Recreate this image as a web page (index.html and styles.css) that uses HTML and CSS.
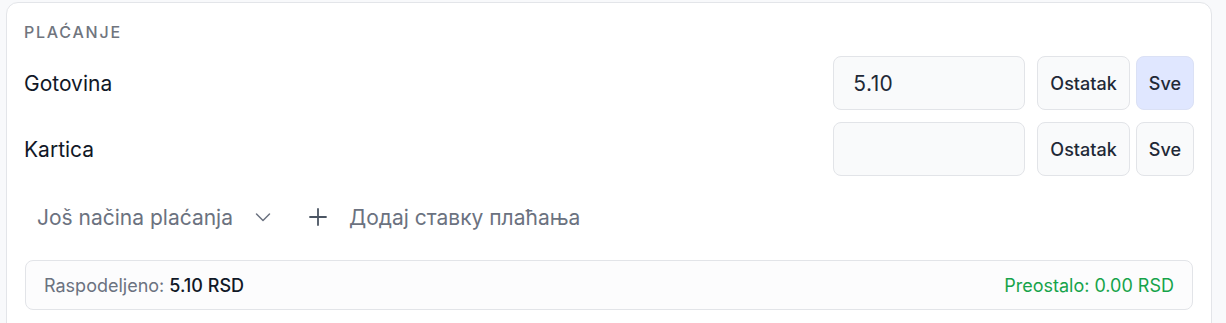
FILE: index.html
```html
<!DOCTYPE html>
<html lang="sr">
<head>
    <meta charset="UTF-8">
    <meta name="viewport" content="width=device-width, initial-scale=1.0">
    <title>Plaćanje</title>
    <link rel="stylesheet" href="styles.css">
</head>
<body>
    <div class="payment-card">
        <h3 class="payment-title">Plaćanje</h3>

        <div class="payment-row">
            <span class="payment-label">Gotovina</span>
            <div class="payment-controls">
                <input class="amount-input" type="text" value="5.10">
                <button class="btn">Ostatak</button>
                <button class="btn btn-active">Sve</button>
            </div>
        </div>

        <div class="payment-row">
            <span class="payment-label">Kartica</span>
            <div class="payment-controls">
                <input class="amount-input" type="text" value="">
                <button class="btn">Ostatak</button>
                <button class="btn">Sve</button>
            </div>
        </div>

        <div class="payment-links">
            <button class="link-btn">
                Još načina plaćanja
                <svg class="chevron" width="16" height="16" viewBox="0 0 16 16" fill="none" stroke="currentColor" stroke-width="1.5" stroke-linecap="round" stroke-linejoin="round"><path d="M1.5 5l6.5 6.5L14.5 5"/></svg>
            </button>
            <button class="link-btn">
                <svg class="plus" width="18" height="18" viewBox="0 0 18 18" fill="none" stroke="currentColor" stroke-width="1.8" stroke-linecap="round"><path d="M9 1v16M1 9h16"/></svg>
                Додај ставку плаћања
            </button>
        </div>

        <div class="payment-summary">
            <span class="summary-left">Raspodeljeno: <strong>5.10 RSD</strong></span>
            <span class="summary-right">Preostalo: 0.00 RSD</span>
        </div>
    </div>
</body>
</html>
```

FILE: styles.css
```css
* {
    margin: 0;
    padding: 0;
    box-sizing: border-box;
}

body {
    font-family: 'Inter', 'Noto Sans', sans-serif;
    background: #f8f9fb;
    color: #111827;
    padding: 2px 14px 0 6px;
    height: 323px;
    overflow: hidden;
}

.payment-card {
    background: #ffffff;
    border: 1px solid #e3e5e9;
    border-radius: 12px;
    padding: 18px 17px 30px 17px;
}

.payment-title {
    font-size: 16px;
    font-weight: 500;
    letter-spacing: 0.11em;
    text-transform: uppercase;
    color: #70757e;
    line-height: 22px;
    margin-bottom: 13px;
}

.payment-row {
    display: flex;
    align-items: center;
    justify-content: space-between;
    margin-bottom: 12px;
}

.payment-label {
    font-size: 21px;
    color: #111827;
}

.payment-controls {
    display: flex;
    align-items: center;
}

.amount-input {
    width: 192px;
    height: 54px;
    border: 1px solid #e2e4e8;
    border-radius: 8px;
    background: #f9fafb;
    padding: 0 19px;
    font-family: inherit;
    font-size: 21px;
    letter-spacing: 0.02em;
    color: #1f2937;
    margin-right: 12px;
    outline: none;
}

.btn {
    height: 54px;
    padding: 0 12px;
    border: 1px solid #e2e4e8;
    border-radius: 8px;
    background: #f9fafb;
    font-family: inherit;
    font-size: 18px;
    font-weight: 500;
    color: #1f2937;
    cursor: pointer;
}

.btn + .btn {
    margin-left: 6px;
}

.btn-active {
    background: #e0e7ff;
    border-color: #dbe1f5;
}

.payment-links {
    display: flex;
    align-items: center;
    gap: 38px;
    padding-left: 13px;
    height: 58px;
    margin-bottom: 14px;
}

.link-btn {
    display: inline-flex;
    align-items: center;
    gap: 22px;
    border: none;
    background: none;
    font-family: inherit;
    font-size: 21px;
    color: #6b7280;
    cursor: pointer;
}

.chevron {
    color: #6b7280;
}

.plus {
    color: #4b5563;
}

.payment-summary {
    display: flex;
    justify-content: space-between;
    align-items: center;
    height: 50px;
    margin: 0 1px;
    padding: 0 18px;
    border: 1px solid #e2e4e8;
    border-radius: 8px;
    background: #fcfcfd;
    font-size: 18px;
}

.summary-left {
    color: #6b7280;
}

.summary-left strong {
    font-weight: 500;
    color: #111827;
}

.summary-right {
    color: #16a34a;
}
```
